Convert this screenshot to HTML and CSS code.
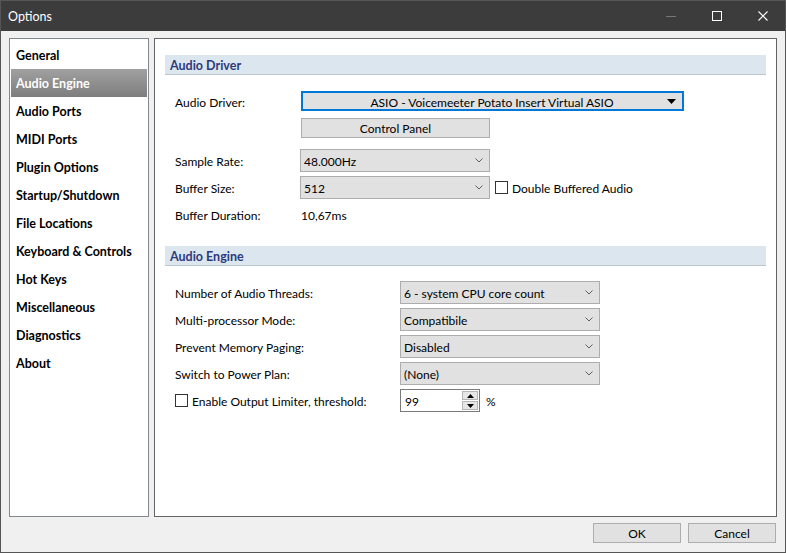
FILE: index.html
```html
<!DOCTYPE html>
<html>
<head>
<meta charset="utf-8">
<link rel="stylesheet" href="styles.css">
</head>
<body>
<div class="window">
  <div class="titlebar">
    <span class="title">Options</span>
    <div class="caps">
      <span class="cap"><svg width="10" height="10" viewBox="0 0 10 10"><line x1="0" y1="5.5" x2="10" y2="5.5" stroke="#777" stroke-width="1"/></svg></span>
      <span class="cap"><svg width="10" height="10" viewBox="0 0 10 10"><rect x="0.5" y="0.5" width="9" height="9" fill="none" stroke="#fff" stroke-width="1"/></svg></span>
      <span class="cap"><svg width="10" height="10" viewBox="0 0 10 10"><path d="M0.5 0.5 L9.5 9.5 M9.5 0.5 L0.5 9.5" stroke="#fff" stroke-width="1.1" fill="none"/></svg></span>
    </div>
  </div>
  <div class="body">
    <div class="main">
      <ul class="nav">
        <li>General</li>
        <li class="sel">Audio Engine</li>
        <li>Audio Ports</li>
        <li>MIDI Ports</li>
        <li>Plugin Options</li>
        <li>Startup/Shutdown</li>
        <li>File Locations</li>
        <li>Keyboard &amp; Controls</li>
        <li>Hot Keys</li>
        <li>Miscellaneous</li>
        <li>Diagnostics</li>
        <li>About</li>
      </ul>
      <div class="panel">
        <div class="section">
          <div class="sechead">Audio Driver</div>
          <div class="secbody s1">
            <div class="row r-driver">
              <span class="label">Audio Driver:</span>
              <div class="driver">
                <span class="dtext">ASIO - Voicemeeter Potato Insert Virtual ASIO</span>
                <svg class="tri" width="9" height="5" viewBox="0 0 9 5"><path d="M0 0 L9 0 L4.5 5 Z" fill="#000"/></svg>
              </div>
            </div>
            <div class="row r-btn">
              <span class="label"></span>
              <div class="btn cpanel">Control Panel</div>
            </div>
            <div class="row r-combo first">
              <span class="label">Sample Rate:</span>
              <div class="combo c1"><span>48.000Hz</span><svg class="chev" width="8" height="5" viewBox="0 0 8 5"><path d="M0.5 0.5 L4 4 L7.5 0.5" stroke="#606060" fill="none"/></svg></div>
            </div>
            <div class="row r-combo">
              <span class="label">Buffer Size:</span>
              <div class="combo c1"><span>512</span><svg class="chev" width="8" height="5" viewBox="0 0 8 5"><path d="M0.5 0.5 L4 4 L7.5 0.5" stroke="#606060" fill="none"/></svg></div>
              <span class="check"><span class="box"></span><span class="ctext">Double Buffered Audio</span></span>
            </div>
            <div class="row r-text">
              <span class="label">Buffer Duration:</span>
              <span class="value">10,67ms</span>
            </div>
          </div>
        </div>
        <div class="section sec2">
          <div class="sechead">Audio Engine</div>
          <div class="secbody s2">
            <div class="row r-combo first">
              <span class="label wide">Number of Audio Threads:</span>
              <div class="combo c2"><span>6 - system CPU core count</span><svg class="chev" width="8" height="5" viewBox="0 0 8 5"><path d="M0.5 0.5 L4 4 L7.5 0.5" stroke="#606060" fill="none"/></svg></div>
            </div>
            <div class="row r-combo">
              <span class="label wide">Multi-processor Mode:</span>
              <div class="combo c2"><span>Compatibile</span><svg class="chev" width="8" height="5" viewBox="0 0 8 5"><path d="M0.5 0.5 L4 4 L7.5 0.5" stroke="#606060" fill="none"/></svg></div>
            </div>
            <div class="row r-combo">
              <span class="label wide">Prevent Memory Paging:</span>
              <div class="combo c2"><span>Disabled</span><svg class="chev" width="8" height="5" viewBox="0 0 8 5"><path d="M0.5 0.5 L4 4 L7.5 0.5" stroke="#606060" fill="none"/></svg></div>
            </div>
            <div class="row r-combo">
              <span class="label wide">Switch to Power Plan:</span>
              <div class="combo c2"><span>(None)</span><svg class="chev" width="8" height="5" viewBox="0 0 8 5"><path d="M0.5 0.5 L4 4 L7.5 0.5" stroke="#606060" fill="none"/></svg></div>
            </div>
            <div class="row r-combo">
              <span class="label wide lbox"><span class="check lim"><span class="box"></span><span class="ctext">Enable Output Limiter, threshold:</span></span></span>
              <div class="spin">
                <span class="stext">99</span>
                <div class="sbtns">
                  <span class="sb"><svg width="7" height="4" viewBox="0 0 7 4"><path d="M3.5 0 L7 4 L0 4 Z" fill="#000"/></svg></span>
                  <span class="sb"><svg width="7" height="4" viewBox="0 0 7 4"><path d="M0 0 L7 0 L3.5 4 Z" fill="#000"/></svg></span>
                </div>
              </div>
              <span class="pct">%</span>
            </div>
          </div>
        </div>
      </div>
    </div>
    <div class="footer">
      <div class="btn fbtn">OK</div>
      <div class="btn fbtn">Cancel</div>
    </div>
  </div>
</div>
</body>
</html>
```

FILE: styles.css
```css
* { box-sizing: border-box; }
html, body { margin: 0; padding: 0; }
body {
  font-family: Lato, "Noto Sans", "Liberation Sans", sans-serif;
  font-size: 12px;
  color: #000;
  width: 786px;
  height: 553px;
  overflow: hidden;
}
.window {
  width: 786px;
  height: 553px;
  border: 1px solid #555555;
  background: #f0f0f0;
  display: flex;
  flex-direction: column;
}
.titlebar {
  height: 30px;
  background: #3c3c3c;
  display: flex;
  align-items: center;
  color: #fff;
}
.title {
  padding-left: 7px;
  font-size: 12.5px;
  flex: 1;
  padding-top: 1px;
}
.caps { display: flex; height: 30px; }
.cap {
  width: 46px;
  height: 30px;
  display: flex;
  align-items: center;
  justify-content: center;
}
.cap:last-child { width: 45px; }
.body {
  flex: 1;
  padding: 7px 8px 9px 8px;
  display: flex;
  flex-direction: column;
}
.main {
  height: 479px;
  display: flex;
  gap: 5px;
}
.nav {
  list-style: none;
  margin: 0;
  padding: 2px 1px;
  width: 140px;
  background: #fff;
  border: 1px solid #828790;
}
.nav li {
  height: 28px;
  line-height: 28px;
  padding-top: 1px;
  padding-left: 5px;
  font-weight: bold;
  font-size: 12.5px;
}
.nav li.sel {
  background: linear-gradient(#a0a0a0, #7e7e7e);
  color: #fff;
}
.panel {
  width: 623px;
  background: #fff;
  border: 1px solid #646464;
  padding: 16px 10px 0 10px;
}
.sechead {
  height: 20px;
  background: #dce6ee;
  border-bottom: 1px solid #bcc6ce;
  color: #2c3a7c;
  font-weight: bold;
  font-size: 12.5px;
  line-height: 19px;
  padding-top: 1px;
  padding-left: 5px;
}
.secbody { padding-left: 10px; }
.s1 { padding-top: 16px; }
.sec2 { margin-top: 21px; }
.s2 { padding-top: 15px; }
.row { display: flex; align-items: center; }
.label, .value, .combo span, .dtext, .ctext, .stext, .pct { padding-top: 2px; }
.label { width: 125px; flex: none; }
.label.wide { width: 225px; }
.label.lbox { padding-top: 0; }
.r-driver { height: 20px; }
.driver {
  margin-left: 1px;
  width: 383px;
  height: 20px;
  border: 2px solid #0078d7;
  background: #e1e1e1;
  display: flex;
  align-items: center;
  padding: 0 6px 0 0;
}
.dtext { flex: 1; text-align: center; padding-left: 14px; }
.tri { flex: none; }
.r-btn { margin-top: 7px; height: 20px; }
.btn {
  background: #e1e1e1;
  border: 1px solid #adadad;
  text-align: center;
  height: 20px;
  line-height: 18px;
  padding-top: 1px;
}
.cpanel { margin-left: 1px; width: 189px; }
.r-combo { height: 23px; margin-top: 4px; }
.s1 .r-combo.first { margin-top: 11px; }
.s2 .r-combo.first { margin-top: 0; }
.combo {
  height: 23px;
  background: #e1e1e1;
  border: 1px solid #adadad;
  display: flex;
  align-items: center;
  padding: 0 6px 0 3px;
}
.combo span { flex: 1; }
.c1 { width: 190px; }
.c2 { width: 200px; }
.chev { flex: none; }
.check { display: flex; align-items: center; margin-left: 5px; }
.check .box {
  width: 13px;
  height: 13px;
  border: 1px solid #333;
  background: #fff;
  margin-right: 4px;
  flex: none;
}
.check.lim { margin-left: 0; }
.r-text { height: 22px; margin-top: 4px; }
.value { margin-left: 1px; }
.spin {
  width: 80px;
  height: 23px;
  border: 1px solid #7a7a7a;
  background: #fff;
  display: flex;
  align-items: center;
  padding-left: 4px;
}
.stext { flex: 1; }
.sbtns {
  width: 17px;
  height: 21px;
  display: flex;
  flex-direction: column;
  gap: 1px;
  padding: 1px 1px 1px 0;
}
.sb {
  flex: 1;
  background: #e6e6e6;
  border: 1px solid #b5b5b5;
  display: flex;
  align-items: center;
  justify-content: center;
}
.pct { margin-left: 6px; }
.footer {
  margin-top: 6px;
  display: flex;
  justify-content: flex-end;
  gap: 7px;
  padding-right: 1px;
}
.fbtn { width: 88px; }
```
